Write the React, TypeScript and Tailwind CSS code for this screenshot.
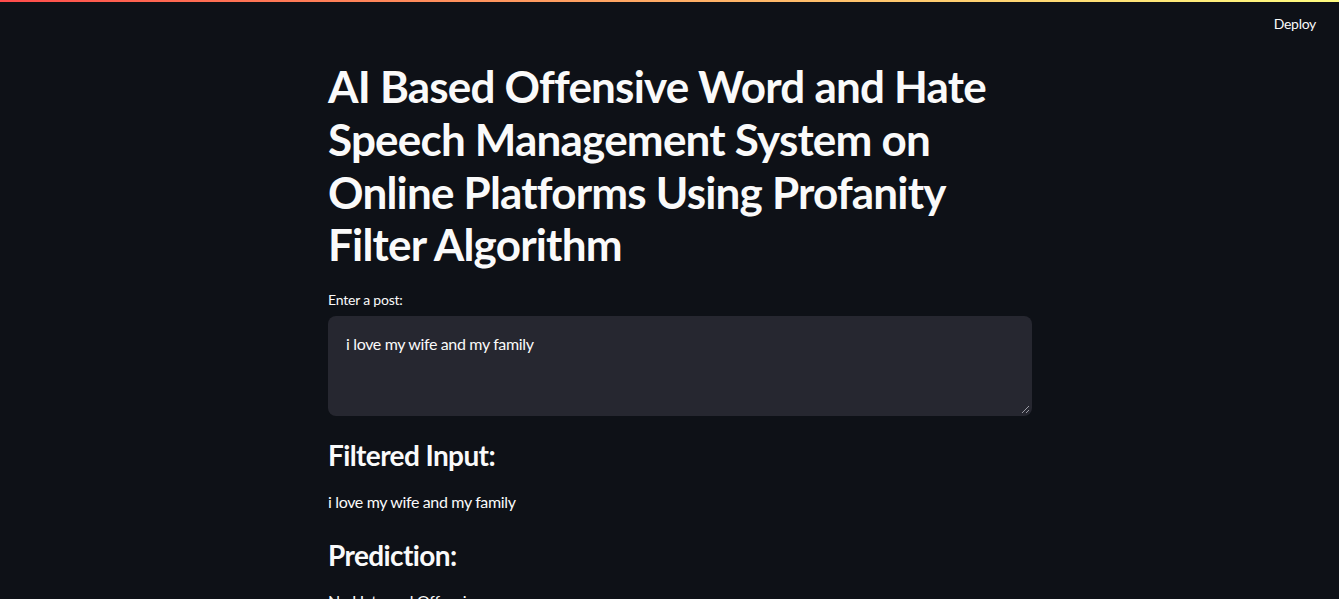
import React from "react";

const font = { fontFamily: '"Source Sans Pro", Lato, "Noto Sans", sans-serif' };

export default function App() {
  return (
    <div className="relative min-h-screen w-full overflow-hidden bg-[#0e1117] text-[#fafafa]" style={font}>
      <div className="h-[2px] w-full bg-gradient-to-r from-[#ff4b4b] to-[#fffd80]" />
      <header className="flex h-[58px] items-start justify-end pr-[23px] pt-[12px]">
        <span className="text-sm leading-[20px] tracking-[-0.3px] text-[#fafafa]">Deploy</span>
      </header>
      <main className="ml-[328px] w-[704px]">
        <h1 className="text-[44px] font-bold leading-[52.8px] tracking-[-0.8px]">
          AI Based Offensive Word and Hate
          <br />
          Speech Management System on
          <br />
          Online Platforms Using Profanity
          <br />
          Filter Algorithm
        </h1>
        <label className="mt-[19px] block text-sm leading-[20px] tracking-[-0.2px]">Enter a post:</label>
        <div className="relative mt-[6px] h-[100px] w-full rounded-lg bg-[#262730] px-[18px] pt-[16px]">
          <p className="text-base leading-[24px] tracking-[-0.35px]">i love my wife and my family</p>
          <svg className="absolute bottom-[2px] right-[2px]" width="9" height="9" viewBox="0 0 9 9">
            <path d="M8 1L1 8M8 5L5 8" stroke="#9a9aa3" strokeWidth="1" />
          </svg>
        </div>
        <h3 className="mt-[19px] text-[28px] font-bold leading-[40px] tracking-[-0.6px]">Filtered Input:</h3>
        <p className="mt-[15px] text-base leading-[24px] tracking-[-0.35px]">i love my wife and my family</p>
        <h3 className="mt-[21px] text-[28px] font-bold leading-[40px] tracking-[-0.6px]">Prediction:</h3>
        <p className="mt-[14px] text-base leading-[24px] tracking-[-0.35px]">No Hate and Offensive</p>
      </main>
    </div>
  );
}
